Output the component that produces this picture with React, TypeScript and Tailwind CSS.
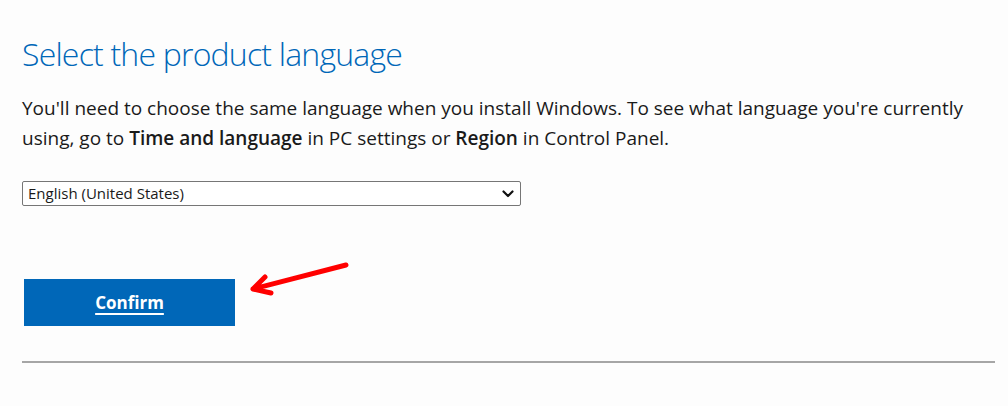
import React from "react";

export default function App() {
  return (
    <div
      className="relative w-[1008px] h-[406px] overflow-hidden bg-[#fdfdfd] pl-[22px] pr-[13px] pt-[34px] text-[#1a1a1a]"
      style={{ fontFamily: '"Open Sans", "Noto Sans", sans-serif' }}
    >
      <h1 className="text-[32px] leading-[40px] font-light tracking-[-0.8px] text-[#0067b8]">
        Select the product language
      </h1>
      <p className="mt-[19px] text-[19px] leading-[30px]">
        You'll need to choose the same language when you install Windows. To see what language you're currently
        <br />
        using, go to <b className="font-semibold">Time and language</b> in PC settings or{" "}
        <b className="font-semibold">Region</b> in Control Panel.
      </p>
      <div className="mt-[28px] flex h-[25px] w-[499px] items-center justify-between rounded-[2px] border border-[#767676] bg-white pl-[5px] pr-[6px] text-[15px]">
        <span>English (United States)</span>
        <svg width="12" height="8" viewBox="0 0 12 8" fill="none">
          <path d="M1.5 1.5 L6 6 L10.5 1.5" stroke="#111" strokeWidth="2.2" strokeLinecap="round" strokeLinejoin="round" />
        </svg>
      </div>
      <div className="mt-[73px] ml-[2px] flex h-[47px] w-[211px] items-center justify-center bg-[#0067b8]">
        <span className="text-[17px] font-bold text-white underline underline-offset-[4px] decoration-[2px]">
          Confirm
        </span>
      </div>
      <div className="mt-[35px] h-[2px] bg-[#a6a6a6]" />
      <svg
        className="absolute left-0 top-0"
        width="1008"
        height="406"
        viewBox="0 0 1008 406"
        fill="none"
      >
        <path
          d="M346 265 L253 289 M265 277 L253 289 L271 293"
          stroke="#ff0000"
          strokeWidth="5"
          strokeLinecap="round"
          strokeLinejoin="round"
        />
      </svg>
    </div>
  );
}
